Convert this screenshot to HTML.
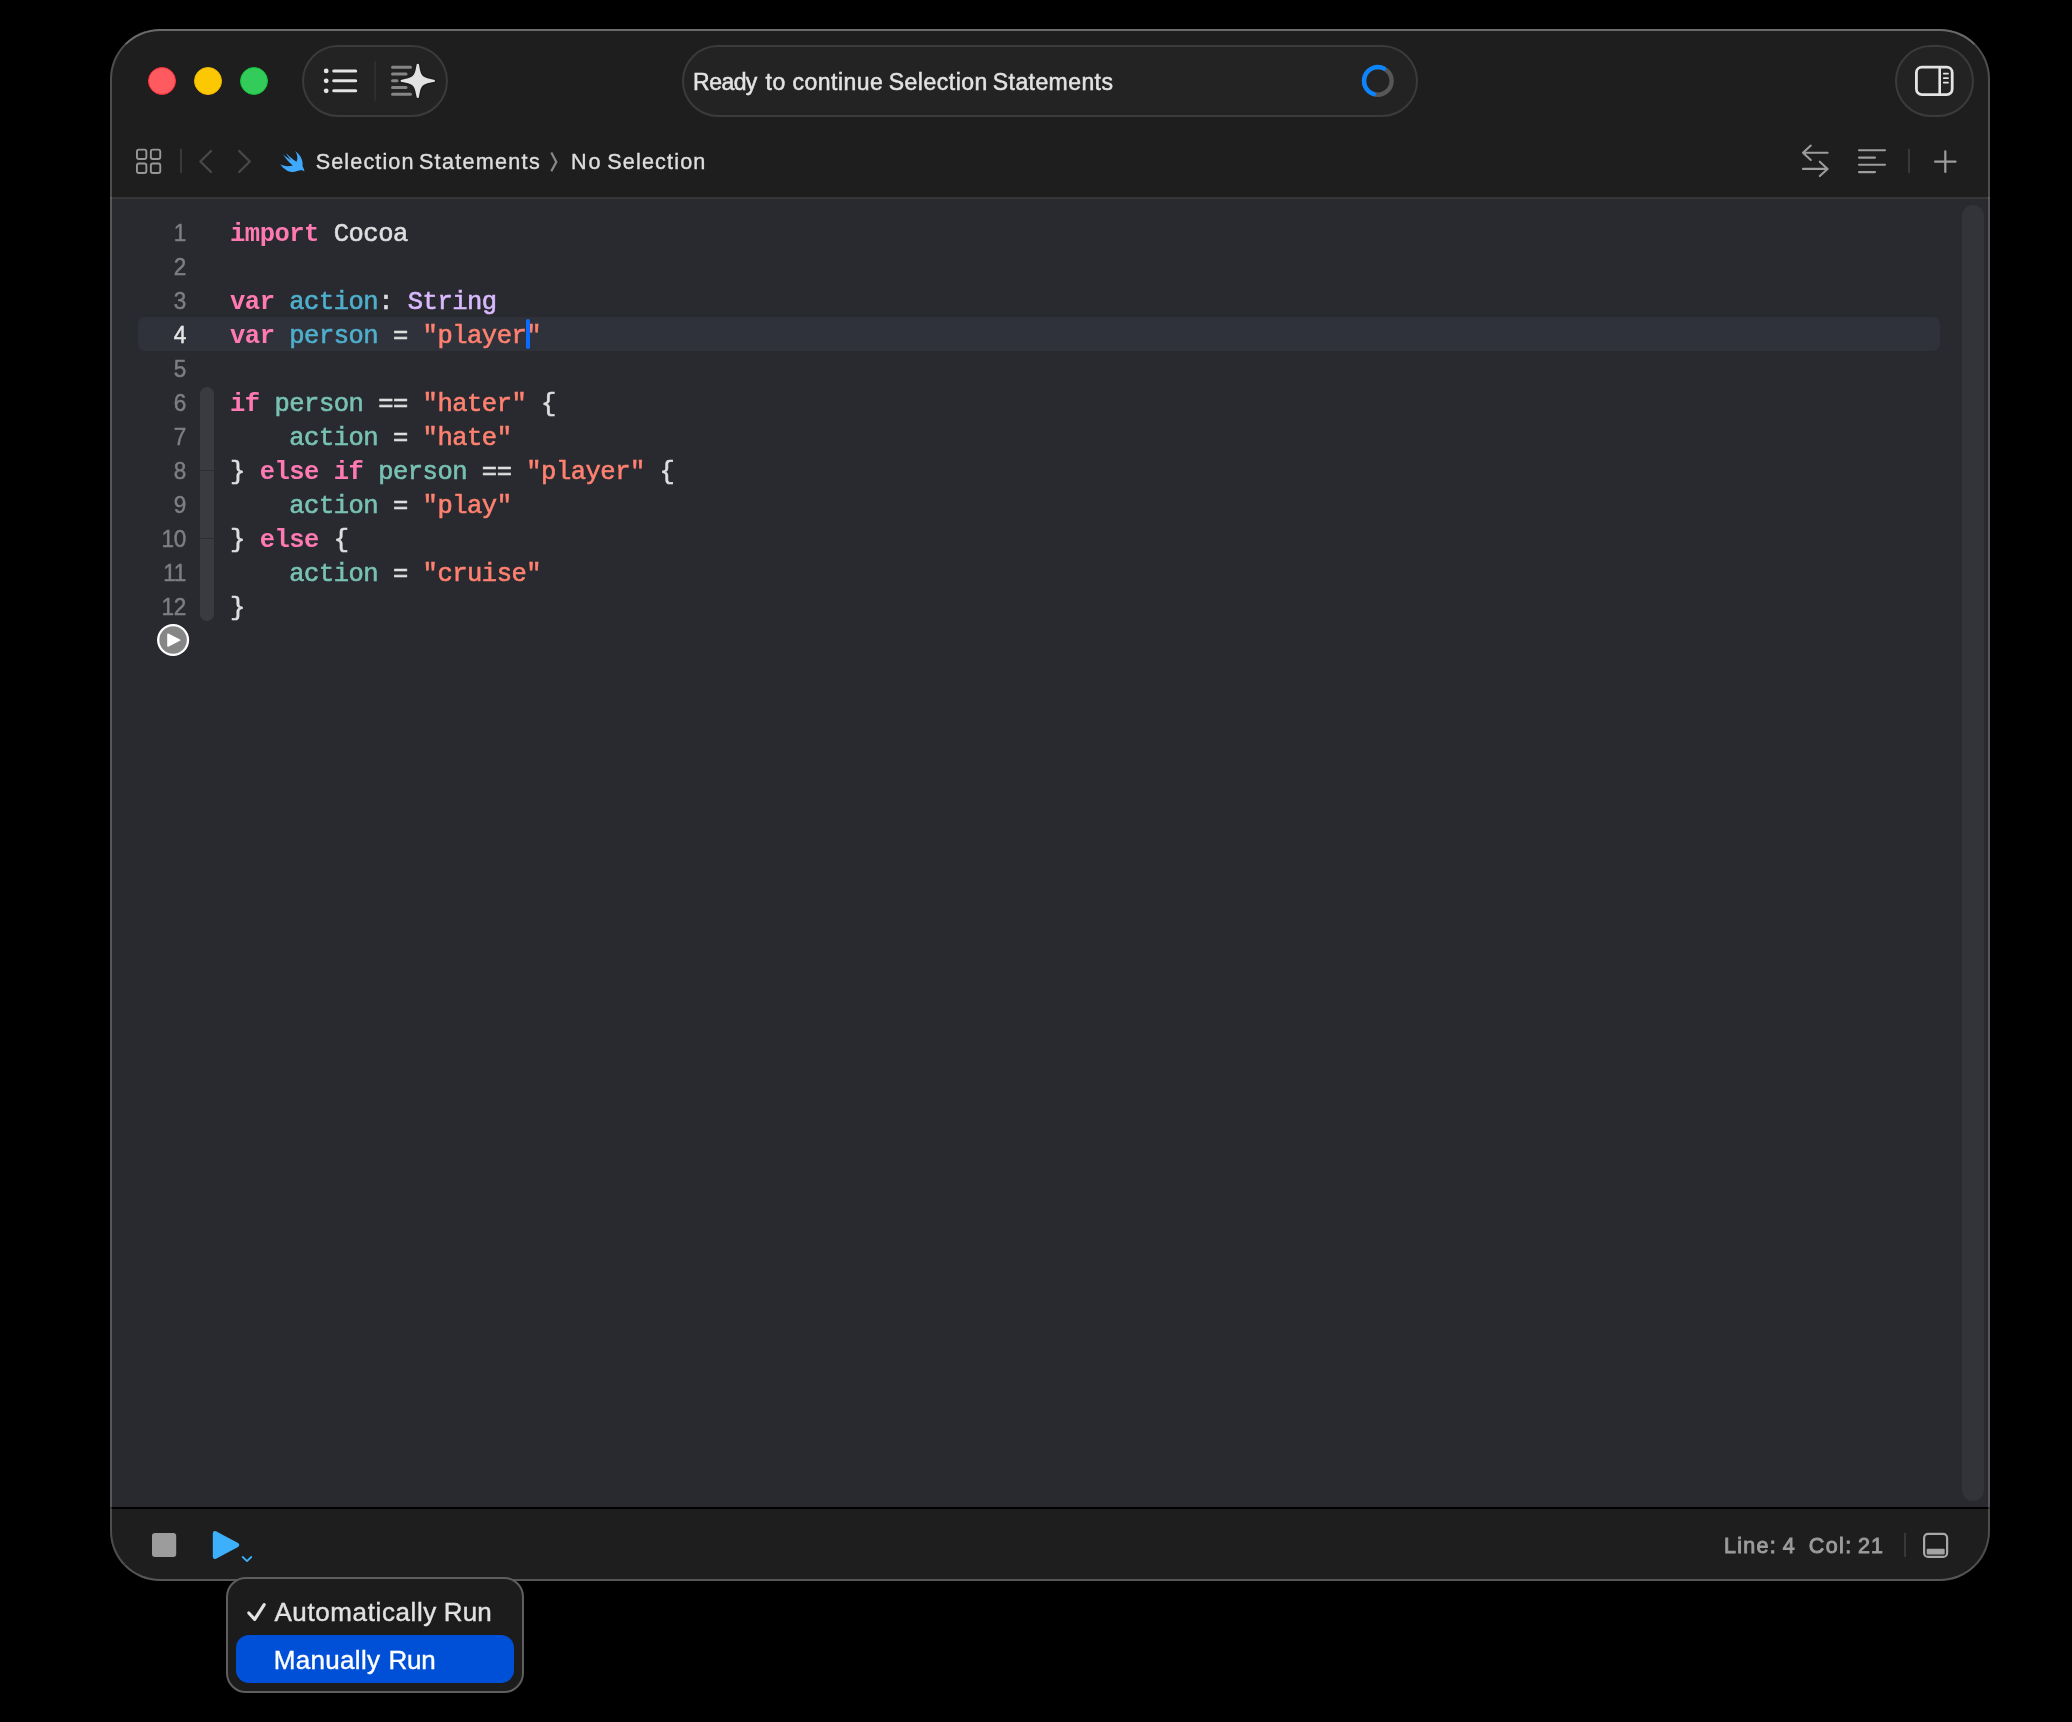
<!DOCTYPE html>
<html>
<head>
<meta charset="utf-8">
<title>Selection Statements</title>
<style>
html,body{margin:0;padding:0;background:#000;}
body{width:2072px;height:1722px;position:relative;overflow:hidden;font-family:"Liberation Sans",sans-serif;}
#root{position:absolute;left:0;top:0;width:2072px;height:1722px;will-change:transform;}
.abs{position:absolute;}
#win{position:absolute;left:110px;top:29px;width:1880px;height:1552px;border-radius:50px;background:#1e1e1e;overflow:hidden;}
#winborder{position:absolute;left:110px;top:29px;width:1880px;height:1552px;border-radius:50px;box-sizing:border-box;border:2px solid rgba(255,255,255,0.21);border-top-color:rgba(255,255,255,0.34);border-bottom-color:rgba(255,255,255,0.25);pointer-events:none;}
#editor{position:absolute;left:0;top:170px;width:1880px;height:1308px;background:#292a30;}
#topsep{position:absolute;left:0;top:168px;width:1880px;height:2px;background:#363636;}
#botsep{position:absolute;left:0;top:1478px;width:1880px;height:2px;background:#000;}
.tl{position:absolute;width:28px;height:28px;border-radius:50%;box-sizing:border-box;top:67px;}
.pill{position:absolute;box-sizing:border-box;border:2px solid #3b3b3b;background:#232323;border-radius:36px;}
.code{position:absolute;left:230px;font-family:"Liberation Mono",monospace;font-size:25.5px;letter-spacing:-0.49px;line-height:34px;height:34px;white-space:pre;color:#dfdfe0;-webkit-text-stroke-width:0.6px;}
.ln{position:absolute;width:80px;left:106px;transform:scaleY(1.09);text-align:right;font-family:"Liberation Sans",sans-serif;font-size:22.5px;line-height:34px;height:34px;color:#7e7e84;letter-spacing:-0.3px;-webkit-text-stroke-width:0.45px;}
.cur{color:#e6e6e6;}
.ti{font-size:23px;line-height:28px;color:#e3e3e3;white-space:pre;-webkit-text-stroke-width:0.5px;}
.bc{font-size:21.6px;line-height:28px;color:#dddddd;white-space:pre;-webkit-text-stroke-width:0.4px;}
.st{font-size:21.5px;line-height:28px;-webkit-text-stroke-width:0.9px;color:#9c9c9c;white-space:pre;}
.mi{font-size:26px;line-height:32px;white-space:pre;-webkit-text-stroke-width:0.4px;}
.m1{color:#e2e2e2;}
.m2{color:#ffffff;}
.k{color:#ff7ab2;font-weight:bold;-webkit-text-stroke-width:0;}
.s{color:#ff8170;}
.t{color:#dabaff;}
.d{color:#4eb0cc;}
.v{color:#78c2b3;}
</style>
</head>
<body>
<div id="root">
<div id="win">
  <!-- traffic lights -->
  <div class="tl" style="left:38px;top:37.5px;background:#ff5a5f;border:1.5px solid #ff2f3b;"></div>
  <div class="tl" style="left:84px;top:37.5px;background:#fcc804;border:1.5px solid #f0b800;"></div>
  <div class="tl" style="left:130px;top:37.5px;background:#33cb5a;border:1.5px solid #14c23a;"></div>
  <!-- left pill -->
  <div class="pill" style="left:192px;top:16px;width:146px;height:72px;"></div>
  <!-- title pill -->
  <div class="pill" style="left:571.5px;top:16px;width:736.6px;height:72px;"></div>
  <!-- right circle -->
  <div class="pill" style="left:1785px;top:16px;width:79px;height:72px;border-radius:36px;"></div>
  <div id="topsep"></div>
  <div id="editor"></div>
  <div id="botsep"></div>
</div>
<div id="winborder"></div>

<!-- toolbar text -->
<div class="abs ti" style="left:693.11px;top:67.7px;letter-spacing:-0.558px">Ready</div>
<div class="abs ti" style="left:765.60px;top:67.7px;letter-spacing:0.484px">to</div>
<div class="abs ti" style="left:792.61px;top:67.7px;letter-spacing:0.456px">continue</div>
<div class="abs ti" style="left:888.75px;top:67.7px;letter-spacing:0.492px">Selection</div>
<div class="abs ti" style="left:992.85px;top:67.7px;letter-spacing:0.412px">Statements</div>
<div class="abs bc" style="left:315.74px;top:148.0px;letter-spacing:1.107px">Selection</div>
<div class="abs bc" style="left:418.94px;top:148.0px;letter-spacing:1.279px">Statements</div>
<div class="abs bc" style="left:571.12px;top:148.0px;letter-spacing:1.688px">No</div>
<div class="abs bc" style="left:607.24px;top:148.0px;letter-spacing:1.157px">Selection</div>
<svg class="abs" style="left:546px;top:148px" width="16" height="28" viewBox="0 0 16 28" fill="none"><path d="M5.3 4.6L10.3 13.9L5.3 23.2" stroke="#8a8a8a" stroke-width="2.2" stroke-linecap="butt" stroke-linejoin="miter"/></svg>

<!-- editor content (absolute page coords) -->
<div class="abs" id="curline" style="left:138px;top:317px;width:1802px;height:34px;border-radius:7px;background:#2f323a;"></div>
<div class="abs" id="ribbon" style="left:200px;top:387px;width:14px;height:234px;border-radius:7px;background:#3a3b41;"></div>
<div class="abs" style="left:200px;top:470px;width:14px;height:1px;background:#2c2d33;"></div>
<div class="abs" style="left:200px;top:538px;width:14px;height:1px;background:#2c2d33;"></div>
<div class="abs" id="scroll" style="left:1962px;top:205px;width:22px;height:1296px;border-radius:11px;background:#333439;"></div>
<div class="ln" style="top:216.1px">1</div>
<div class="code" style="top:218px"><span class="k">import</span> Cocoa</div>
<div class="ln" style="top:250.1px">2</div>
<div class="ln" style="top:284.1px">3</div>
<div class="code" style="top:286px"><span class="k">var</span> <span class="d">action</span>: <span class="t">String</span></div>
<div class="ln cur" style="top:318.1px">4</div>
<div class="code" style="top:320px"><span class="k">var</span> <span class="d">person</span> = <span class="s">"player"</span></div>
<div class="ln" style="top:352.1px">5</div>
<div class="ln" style="top:386.1px">6</div>
<div class="code" style="top:388px"><span class="k">if</span> <span class="v">person</span> == <span class="s">"hater"</span> {</div>
<div class="ln" style="top:420.1px">7</div>
<div class="code" style="top:422px">    <span class="v">action</span> = <span class="s">"hate"</span></div>
<div class="ln" style="top:454.1px">8</div>
<div class="code" style="top:456px">} <span class="k">else</span> <span class="k">if</span> <span class="v">person</span> == <span class="s">"player"</span> {</div>
<div class="ln" style="top:488.1px">9</div>
<div class="code" style="top:490px">    <span class="v">action</span> = <span class="s">"play"</span></div>
<div class="ln" style="top:522.1px">10</div>
<div class="code" style="top:524px">} <span class="k">else</span> {</div>
<div class="ln" style="top:556.1px">11</div>
<div class="code" style="top:558px">    <span class="v">action</span> = <span class="s">"cruise"</span></div>
<div class="ln" style="top:590.1px">12</div>
<div class="code" style="top:592px">}</div>
<div class="abs" id="caret" style="left:526.3px;top:319.3px;width:3.5px;height:29.7px;background:#0a6cff;border-radius:1.75px;"></div>

<!-- icons -->
<svg class="abs" style="left:0;top:0" width="2072" height="1722" viewBox="0 0 2072 1722" fill="none">
<!-- list icon -->
<g fill="#e4e4e4" stroke="none">
<circle cx="326.2" cy="70.9" r="2.4"/><circle cx="326.2" cy="80.8" r="2.4"/><circle cx="326.2" cy="90.8" r="2.4"/>
</g>
<g stroke="#e4e4e4" stroke-width="3" stroke-linecap="round">
<path d="M333.7 70.9H355.7M333.7 80.8H355.7M333.7 90.8H355.7"/>
</g>
<path d="M375 61V100.7" stroke="#303030" stroke-width="1.8"/>
<!-- assistant icon -->
<g stroke="#868686" stroke-width="3" stroke-linecap="round">
<path d="M392.5 67.3H410.5M392.5 74H406M392.5 80.8H397M392.5 87.5H406M392.5 94.3H410.5"/>
</g>
<g transform="translate(417.8 80.85)"><path d="M-1.2-16A1.2 1.2 0 0 1 1.2-16C3.2-4.27 4.27-3.2 16-1.2A1.2 1.2 0 0 1 16 1.2C4.27 3.2 3.2 4.27 1.2 16A1.2 1.2 0 0 1-1.2 16C-3.2 4.27-4.27 3.2-16 1.2A1.2 1.2 0 0 1-16-1.2C-4.27-3.2-3.2-4.27-1.2-16Z" fill="#e2e2e2" stroke="#1c1c1c" stroke-width="2.4" paint-order="stroke"/></g>
<!-- spinner -->
<circle cx="1377.8" cy="80.9" r="13.8" stroke="#575757" stroke-width="4.4"/>
<path d="M1373.77 94.1 A13.8 13.8 0 1 1 1384.07 68.6" stroke="#0a84ff" stroke-width="4.4" stroke-linecap="round"/>
<!-- inspector icon -->
<rect x="1916.4" y="67.2" width="35.8" height="27.4" rx="5.5" stroke="#e4e4e4" stroke-width="2.8"/>
<path d="M1939.7 67V95" stroke="#e4e4e4" stroke-width="2.6"/>
<path d="M1943.8 73.6H1948M1943.8 78.1H1948M1943.8 82.6H1948" stroke="#e4e4e4" stroke-width="1.8" stroke-linecap="round"/>
<!-- grid icon -->
<g stroke="#979797" stroke-width="1.9">
<rect x="136.95" y="149.65" width="9.4" height="9.4" rx="2"/><rect x="150.85" y="149.65" width="9.4" height="9.4" rx="2"/>
<rect x="136.95" y="163.55" width="9.4" height="9.4" rx="2"/><rect x="150.85" y="163.55" width="9.4" height="9.4" rx="2"/>
</g>
<path d="M181 148.8V173.1" stroke="#393939" stroke-width="2"/>
<path d="M211 151L200.4 161.5L211 172" stroke="#484848" stroke-width="2.4" stroke-linecap="round" stroke-linejoin="round"/>
<path d="M239.2 151L249.8 161.5L239.2 172" stroke="#484848" stroke-width="2.4" stroke-linecap="round" stroke-linejoin="round"/>
<!-- swift bird -->
<path id="swift" d="M295.2 150.9C300 154.3 303.6 160.4 302.5 166C303.2 167.4 304.5 169.8 304.3 172C303.4 170.6 302.6 170.3 301.6 170.3C299.6 170.3 298.6 170.6 297.2 171C293.6 172.6 289.8 172 286.8 170.4C284.2 169 281.8 166.8 280.1 164.1C282.8 166 287.5 167.2 292.9 165.5C289.4 162.8 285.4 158.4 282.9 154.3C285.4 156.6 288.6 158.8 291.3 160.4C289.2 158.2 287.2 155.4 285.9 152.9C288.6 155.6 292.6 159.2 296.4 161.7C297.8 159.4 297.8 155 295.2 150.9Z" fill="#3ea9fd"/>
<!-- right nav icons -->
<g stroke="#9d9d9d" stroke-width="2.1" stroke-linecap="round" stroke-linejoin="round">
<path d="M1827.6 152.8H1803M1810.8 145.6L1803 152.8L1810.8 160"/>
<path d="M1803 168.9H1827.6M1819.8 161.7L1827.6 168.9L1819.8 176.1"/>
</g>
<g stroke="#9d9d9d" stroke-width="2.1" stroke-linecap="round">
<path d="M1859 150.2H1885M1859 157.6H1875M1859 164.8H1885M1859 172.1H1875"/>
</g>
<path d="M1909 148.8V173.1" stroke="#393939" stroke-width="2"/>
<path d="M1935.1 161.7H1955.5M1945.3 151.3V171.9" stroke="#9d9d9d" stroke-width="2.2" stroke-linecap="round"/>
<!-- run button in gutter -->
<circle cx="173.1" cy="640" r="14.9" fill="#868686" stroke="#ffffff" stroke-width="2.3"/>
<path d="M168 634.2L179.6 640.1L168 646Z" fill="#fff" stroke="#fff" stroke-width="1.6" stroke-linejoin="round"/>
<!-- bottom bar -->
<rect x="152" y="1533" width="24.2" height="24" rx="3" fill="#9c9c9c"/>
<path d="M215 1533.3L237 1545L215 1556.7Z" fill="#3db0fb" stroke="#3db0fb" stroke-width="4.4" stroke-linejoin="round"/>
<path d="M242.7 1557L247 1561.1L251.3 1557" stroke="#3db0fb" stroke-width="1.8" stroke-linecap="round" stroke-linejoin="round"/>
<rect x="1904" y="1533" width="2" height="24" fill="#383838"/>
<rect x="1924.1" y="1533.8" width="23" height="23.1" rx="4" stroke="#a8a8a8" stroke-width="2.2"/>
<rect x="1926.7" y="1548.7" width="18" height="5.9" rx="1" fill="#a3a3a3"/>
</svg>
<div class="abs st" style="left:1724.01px;top:1532.2px;letter-spacing:1.254px">Line:</div>
<div class="abs st" style="left:1782.78px;top:1532.2px;letter-spacing:0.000px">4</div>
<div class="abs st" style="left:1808.79px;top:1532.2px;letter-spacing:1.425px">Col:</div>
<div class="abs st" style="left:1858.04px;top:1532.2px;letter-spacing:0.945px">21</div>

<!-- popup menu -->
<div class="abs" id="menu" style="left:226.4px;top:1576.8px;width:297.2px;height:116.4px;box-sizing:border-box;border-radius:20px;background:#1c1c1c;border:2px solid #5e5e5e;"></div>
<div class="abs" id="menusel" style="left:236px;top:1634.8px;width:278px;height:48.2px;border-radius:13px;background:#0050d7;"></div>
<svg class="abs" style="left:240px;top:1596px" width="32" height="32" viewBox="240 1596 32 32" fill="none"><path d="M248.8 1613L254.7 1619.4L264.2 1604.6" stroke="#e2e2e2" stroke-width="3.2" stroke-linecap="round" stroke-linejoin="round"/></svg>
<div class="abs mi m1" style="left:274.42px;top:1596px;letter-spacing:0.611px">Automatically</div>
<div class="abs mi m1" style="left:443.75px;top:1596px;letter-spacing:0.128px">Run</div>
<div class="abs mi m2" style="left:273.75px;top:1644px;letter-spacing:0.319px">Manually</div>
<div class="abs mi m2" style="left:388.55px;top:1644px;letter-spacing:-0.272px">Run</div>
</div>
</body>
</html>
